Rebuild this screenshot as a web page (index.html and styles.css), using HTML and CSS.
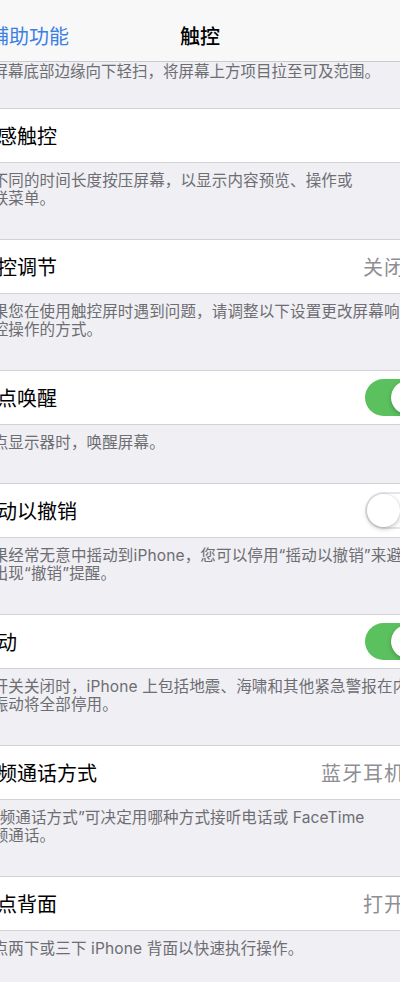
FILE: index.html
```html
<!DOCTYPE html>
<html lang="zh-CN">
  <head>
    <meta charset="UTF-8" />
    <meta name="viewport" content="width=device-width, initial-scale=1.0" />
    <title>触控</title>
    <link rel="stylesheet" href="styles.css">
  </head>
  <body>
    <div class="page">
      <div class="navbar">
        <div class="nav-back">
          <svg class="back-icon" width="14" height="24" viewBox="0 0 14 24">
            <path d="M12 2 L2 12 L12 22" fill="none" stroke="currentColor" stroke-width="3" stroke-linecap="round" stroke-linejoin="round" />
          </svg>
          <span>辅助功能</span>
        </div>
        <div class="nav-title">触控</div>
        <div></div>
      </div>

      <div class="lead">在屏幕底部边缘向下轻扫，将屏幕上方项目拉至可及范围。</div>

      <div class="cell">
        <span class="label">触感触控</span>
        <span class="value"></span>
        <svg class="chevron" width="12" height="20" viewBox="0 0 12 20"><path d="M2 2 L10 10 L2 18" fill="none" stroke="#c7c7cc" stroke-width="2.5" stroke-linecap="round" /></svg>
      </div>
      <div class="note">以不同的时间长度按压屏幕，以显示内容预览、操作或<br>关联菜单。</div>

      <div class="cell">
        <span class="label">触控调节</span>
        <span class="value">关闭</span>
        <svg class="chevron" width="12" height="20" viewBox="0 0 12 20"><path d="M2 2 L10 10 L2 18" fill="none" stroke="#c7c7cc" stroke-width="2.5" stroke-linecap="round" /></svg>
      </div>
      <div class="note">如果您在使用触控屏时遇到问题，请调整以下设置更改屏幕响应<br>触控操作的方式。</div>

      <div class="cell">
        <span class="label">轻点唤醒</span>
        <span class="switch on"><span class="knob"></span></span>
      </div>
      <div class="note">轻点显示器时，唤醒屏幕。</div>

      <div class="cell">
        <span class="label">摇动以撤销</span>
        <span class="switch"><span class="knob"></span></span>
      </div>
      <div class="note">如果经常无意中摇动到iPhone，您可以停用“摇动以撤销”来避<br>免出现“撤销”提醒。</div>

      <div class="cell">
        <span class="label">振动</span>
        <span class="switch on"><span class="knob"></span></span>
      </div>
      <div class="note">此开关关闭时，iPhone 上包括地震、海啸和其他紧急警报在内的所<br>有振动将全部停用。</div>

      <div class="cell">
        <span class="label">音频通话方式</span>
        <span class="value">蓝牙耳机</span>
        <svg class="chevron" width="12" height="20" viewBox="0 0 12 20"><path d="M2 2 L10 10 L2 18" fill="none" stroke="#c7c7cc" stroke-width="2.5" stroke-linecap="round" /></svg>
      </div>
      <div class="note">“音频通话方式”可决定用哪种方式接听电话或 FaceTime<br>音频通话。</div>

      <div class="cell">
        <span class="label">轻点背面</span>
        <span class="value">打开</span>
        <svg class="chevron" width="12" height="20" viewBox="0 0 12 20"><path d="M2 2 L10 10 L2 18" fill="none" stroke="#c7c7cc" stroke-width="2.5" stroke-linecap="round" /></svg>
      </div>
      <div class="note">轻点两下或三下 iPhone 背面以快速执行操作。</div>
    </div>
  </body>
</html>
```

FILE: styles.css
```css
* {
  box-sizing: border-box;
}
body {
  margin: 0;
  background: #efeff4;
  overflow: hidden;
  font-family: Inter, "Noto Sans CJK SC", sans-serif;
}
.page {
  width: 490px;
  margin-left: -45px;
}
.navbar {
  height: 62px;
  padding-top: 9px;
  background: #f8f8f8;
  border-bottom: 1px solid #c9c9ce;
  display: grid;
  grid-template-columns: 1fr auto 1fr;
  align-items: center;
}
.nav-back {
  display: flex;
  align-items: center;
  gap: 10px;
  padding-left: 10px;
  color: #3b7fe3;
  font-size: 20px;
}
.nav-title {
  font-size: 20px;
  font-weight: 500;
  color: #000;
}
.lead {
  padding: 0 19px 27px 22px;
  font-size: 15.5px;
  line-height: 19px;
  color: #6d6d72;
  white-space: nowrap;
}
.cell {
  height: 55px;
  background: #fff;
  border-top: 1px solid #d1d1d6;
  border-bottom: 1px solid #d1d1d6;
  display: flex;
  align-items: center;
  padding: 0 19px 0 22px;
  font-size: 20px;
  color: #000;
}
.label {
  flex: 1;
  white-space: nowrap;
}
.value {
  color: #8e8e93;
  letter-spacing: 1px;
  white-space: nowrap;
}
.chevron {
  margin-left: 9px;
}
.note {
  padding: 9px 19px 31px 22px;
  font-size: 15.5px;
  line-height: 18px;
  letter-spacing: 0.15px;
  color: #6d6d72;
  white-space: nowrap;
}
.switch {
  width: 61px;
  height: 37px;
  border-radius: 19px;
  background: #fff;
  box-shadow: inset 0 0 0 2px #e5e5ea;
  display: flex;
  align-items: center;
  padding: 2px;
}
.switch.on {
  background: #5bc15f;
  box-shadow: none;
  justify-content: flex-end;
}
.knob {
  width: 33px;
  height: 33px;
  border-radius: 50%;
  background: #fff;
  box-shadow: 0 2px 5px rgba(0, 0, 0, 0.22), 0 0 0 0.5px rgba(0, 0, 0, 0.08);
}
```
